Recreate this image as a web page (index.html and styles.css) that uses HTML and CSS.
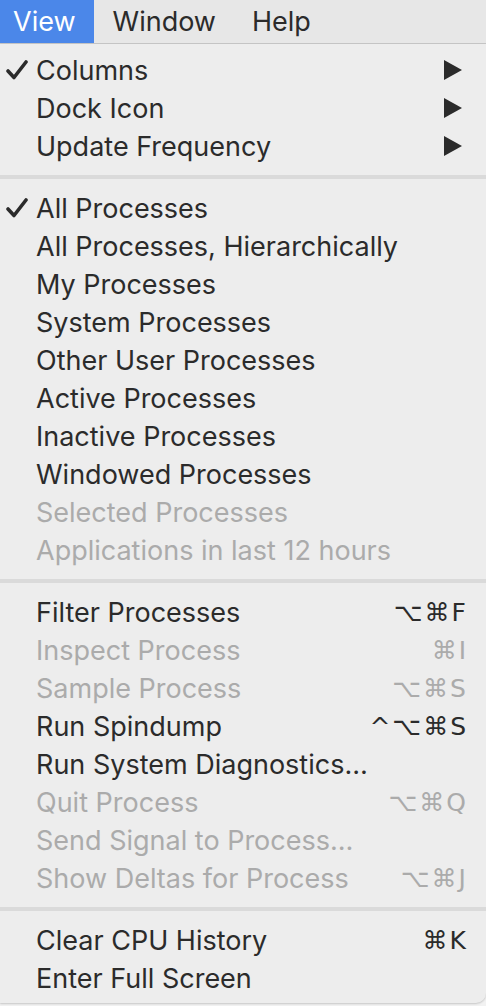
FILE: index.html
```html
<!DOCTYPE html>
<html>
<head>
<meta charset="utf-8">
<link rel="stylesheet" href="styles.css">
</head>
<body>
<div class="menubar">
  <div class="mb-item active">View</div>
  <div class="mb-item">Window</div>
  <div class="mb-item">Help</div>
</div>
<div class="menu">
  <div class="row"><span class="chk"><svg width="22" height="22" viewBox="0 0 22 22"><path d="M2 12 L8 18.5 L20 3" fill="none" stroke="#2b2b2b" stroke-width="3.6" stroke-linecap="round" stroke-linejoin="round"/></svg></span><span class="label">Columns</span><span class="sub"><svg width="18" height="20" viewBox="0 0 18 20"><polygon points="0,0 18,10 0,20" fill="#2b2b2b"/></svg></span></div>
  <div class="row"><span class="chk"></span><span class="label">Dock Icon</span><span class="sub"><svg width="18" height="20" viewBox="0 0 18 20"><polygon points="0,0 18,10 0,20" fill="#2b2b2b"/></svg></span></div>
  <div class="row"><span class="chk"></span><span class="label">Update Frequency</span><span class="sub"><svg width="18" height="20" viewBox="0 0 18 20"><polygon points="0,0 18,10 0,20" fill="#2b2b2b"/></svg></span></div>
  <div class="sep"></div>
  <div class="row"><span class="chk"><svg width="22" height="22" viewBox="0 0 22 22"><path d="M2 12 L8 18.5 L20 3" fill="none" stroke="#2b2b2b" stroke-width="3.6" stroke-linecap="round" stroke-linejoin="round"/></svg></span><span class="label">All Processes</span></div>
  <div class="row"><span class="chk"></span><span class="label">All Processes, Hierarchically</span></div>
  <div class="row"><span class="chk"></span><span class="label">My Processes</span></div>
  <div class="row"><span class="chk"></span><span class="label">System Processes</span></div>
  <div class="row"><span class="chk"></span><span class="label">Other User Processes</span></div>
  <div class="row"><span class="chk"></span><span class="label">Active Processes</span></div>
  <div class="row"><span class="chk"></span><span class="label">Inactive Processes</span></div>
  <div class="row"><span class="chk"></span><span class="label">Windowed Processes</span></div>
  <div class="row disabled"><span class="chk"></span><span class="label">Selected Processes</span></div>
  <div class="row disabled"><span class="chk"></span><span class="label">Applications in last 12 hours</span></div>
  <div class="sep"></div>
  <div class="row"><span class="chk"></span><span class="label">Filter Processes</span><span class="key">⌥⌘F</span></div>
  <div class="row disabled"><span class="chk"></span><span class="label">Inspect Process</span><span class="key">⌘I</span></div>
  <div class="row disabled"><span class="chk"></span><span class="label">Sample Process</span><span class="key">⌥⌘S</span></div>
  <div class="row"><span class="chk"></span><span class="label">Run Spindump</span><span class="key">^⌥⌘S</span></div>
  <div class="row"><span class="chk"></span><span class="label">Run System Diagnostics…</span></div>
  <div class="row disabled"><span class="chk"></span><span class="label">Quit Process</span><span class="key">⌥⌘Q</span></div>
  <div class="row disabled"><span class="chk"></span><span class="label">Send Signal to Process…</span></div>
  <div class="row disabled"><span class="chk"></span><span class="label">Show Deltas for Process</span><span class="key">⌥⌘J</span></div>
  <div class="sep"></div>
  <div class="row"><span class="chk"></span><span class="label">Clear CPU History</span><span class="key">⌘K</span></div>
  <div class="row"><span class="chk"></span><span class="label">Enter Full Screen</span></div>
</div>
</body>
</html>
```
FILE: styles.css
```css
html, body {
  margin: 0;
  padding: 0;
  background: #f2f2f2;
}
body {
  font-family: Inter, "Liberation Sans", sans-serif;
  font-size: 27px;
  color: #2b2b2b;
  width: 486px;
  height: 1006px;
  overflow: hidden;
}
.menubar {
  height: 43px;
  display: flex;
  align-items: stretch;
  background: #e7e7e7;
  border-bottom: 1px solid #c6c6c6;
}
.mb-item {
  display: flex;
  align-items: center;
  padding-right: 36px;
}
.mb-item.active {
  background: #4b87e9;
  color: #ffffff;
  padding: 0 18px 0 13px;
}
.mb-item:nth-child(2) {
  margin-left: 19px;
}
.menu {
  background: #ededed;
  padding: 7px 0 6px;
  border-bottom-right-radius: 10px;
  box-shadow: 0 1px 2px rgba(0,0,0,0.18);
}
.row {
  height: 38px;
  display: grid;
  grid-template-columns: 37px 1fr auto;
  align-items: center;
  padding-right: 21px;
}
.label {
  margin-left: -1px;
}
.chk {
  display: flex;
  align-items: center;
  padding-left: 6px;
}
.sub {
  display: flex;
  align-items: center;
  padding-right: 3px;
}
.key {
  letter-spacing: 2px;
  margin-right: -3px;
  font-family: "DejaVu Sans", sans-serif;
  font-size: 25px;
}
.disabled {
  color: #ababab;
}
.sep {
  height: 24px;
  display: flex;
  align-items: center;
}
.sep::before {
  content: "";
  display: block;
  width: 100%;
  height: 4px;
  background: #dadada;
}
```
